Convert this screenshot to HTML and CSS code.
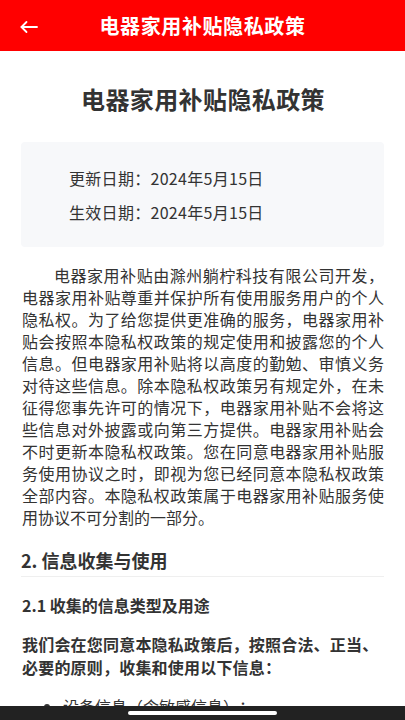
FILE: index.html
```html
<!DOCTYPE html>
<html lang="zh-CN">
<head>
<meta charset="utf-8">
<meta name="viewport" content="width=device-width, initial-scale=1">
<title>电器家用补贴隐私政策</title>
<link rel="stylesheet" href="styles.css">
</head>
<body>
<header class="topbar">
  <span class="back" aria-label="返回">
    <svg width="18" height="14" viewBox="0 0 18 14" fill="none" stroke="#fff" stroke-width="1.8" stroke-linecap="round" stroke-linejoin="round">
      <path d="M17 7H1.5"/>
      <path d="M6.5 2L1.5 7l5 5"/>
    </svg>
  </span>
  <h1 class="topbar-title">电器家用补贴隐私政策</h1>
</header>
<main class="page">
  <h2 class="doc-title">电器家用补贴隐私政策</h2>
  <section class="dates">
    <p class="date-row">更新日期：2024年5月15日</p>
    <p class="date-row">生效日期：2024年5月15日</p>
  </section>
  <p class="intro">电器家用补贴由滁州躺柠科技有限公司开发，电器家用补贴尊重并保护所有使用服务用户的个人隐私权。为了给您提供更准确的服务，电器家用补贴会按照本隐私权政策的规定使用和披露您的个人信息。但电器家用补贴将以高度的勤勉、审慎义务对待这些信息。除本隐私权政策另有规定外，在未征得您事先许可的情况下，电器家用补贴不会将这些信息对外披露或向第三方提供。电器家用补贴会不时更新本隐私权政策。您在同意电器家用补贴服务使用协议之时，即视为您已经同意本隐私权政策全部内容。本隐私权政策属于电器家用补贴服务使用协议不可分割的一部分。</p>
  <h3 class="section-title">2. 信息收集与使用</h3>
  <h4 class="sub-title">2.1 收集的信息类型及用途</h4>
  <p class="lead">我们会在您同意本隐私政策后，按照合法、正当、必要的原则，收集和使用以下信息：</p>
  <ul class="items">
    <li>设备信息（含敏感信息）：</li>
  </ul>
</main>
<div class="homebar"><span class="indicator"></span></div>
</body>
</html>
```
FILE: styles.css
```css
* { box-sizing: border-box; }
html, body { margin: 0; padding: 0; }
body {
  font-family: "Noto Sans CJK SC", "Noto Sans", sans-serif;
  color: #333;
  background: #fff;
  width: 405px;
  height: 720px;
  overflow: hidden;
  text-spacing-trim: space-all;
}
.topbar {
  height: 51px;
  background: #ff0000;
  display: flex;
  align-items: center;
  justify-content: center;
  position: relative;
}
.back {
  position: absolute;
  left: 20px;
  top: 20px;
  width: 18px;
  height: 14px;
  display: flex;
}
.topbar-title {
  margin: 0;
  color: #fff;
  font-size: 20px;
  font-weight: 700;
  letter-spacing: 0.6px;
  line-height: 28px;
}
.page {
  padding: 0 21px 0 22px;
}
.doc-title {
  margin: 31px 0 0;
  text-align: center;
  font-size: 24px;
  line-height: 34px;
  font-weight: 700;
  letter-spacing: 0.4px;
  color: #333;
}
.dates {
  margin-top: 26px;
  margin-left: -1px;
  background: #f7f8fa;
  border-radius: 4px;
  padding: 19px 48px 18px;
  height: 105px;
}
.date-row {
  margin: 0;
  font-size: 16px;
  line-height: 34px;
  letter-spacing: 0.3px;
  color: #333;
}
.intro {
  margin: 17px 0 0;
  font-size: 16px;
  line-height: 22px;
  text-indent: 2em;
  text-align: justify;
  color: #333;
}
.section-title {
  margin: 19px 0 0;
  font-size: 18px;
  line-height: 26px;
  font-weight: 700;
  padding-bottom: 3px;
  border-bottom: 1px solid #efefef;
  margin-left: -1px;
}
.sub-title {
  margin: 16px 0 0;
  font-size: 16px;
  line-height: 24px;
  font-weight: 700;
}
.lead {
  margin: 16px 0 0;
  font-size: 16px;
  line-height: 23px;
  font-weight: 700;
  letter-spacing: 0.2px;
}
.items {
  margin: 16px 0 0;
  padding-left: 41px;
  font-size: 16px;
  line-height: 23px;
}
.homebar {
  position: fixed;
  left: 0;
  right: 0;
  bottom: 0;
  height: 14px;
  background: #222;
  display: flex;
  justify-content: center;
  align-items: center;
}
.indicator {
  width: 149px;
  height: 4px;
  border-radius: 2px;
  background: #fff;
}
```
